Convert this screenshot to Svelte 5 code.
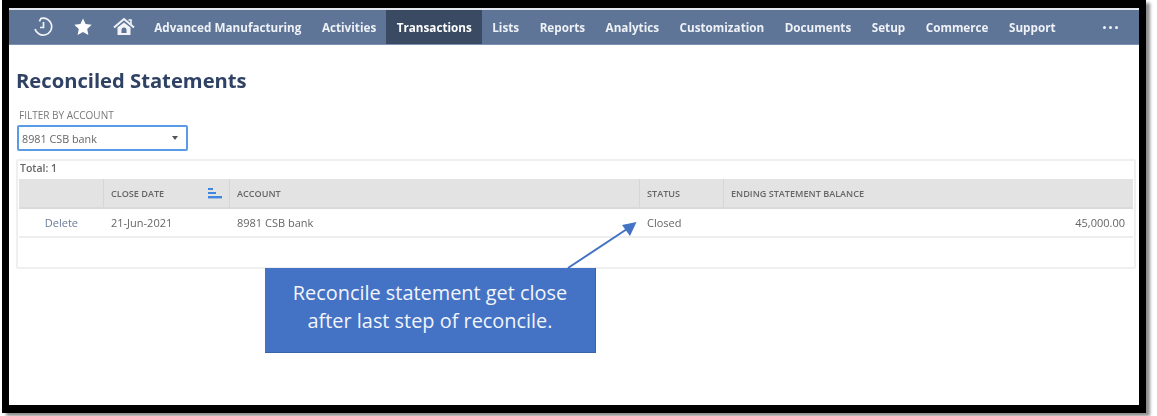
<script lang="ts">
  const navItems = [
    "Advanced Manufacturing",
    "Activities",
    "Transactions",
    "Lists",
    "Reports",
    "Analytics",
    "Customization",
    "Documents",
    "Setup",
    "Commerce",
    "Support",
  ];
  const activeItem = "Transactions";
</script>

<div class="shot">
  <div class="frame">
    <div class="topline"></div>
    <nav class="navbar">
      <div class="icons">
        <svg class="icon" viewBox="0 0 20 20" width="20" height="20" aria-hidden="true">
          <path d="M2 12A8.500 8.500 0 1 0 8 1.400L6.400 4.400" fill="none" stroke="#f1f3f7" stroke-width="1.700" />
          <path d="M10.500 5v5.500H7" fill="none" stroke="#f1f3f7" stroke-width="1.700" />
        </svg>
        <svg class="icon" viewBox="0 0 20 20" width="20" height="20" aria-hidden="true">
          <path d="M10 1.500l2.600 5.600 6.100.7-4.500 4.200 1.200 6L10 15l-5.400 3 1.200-6-4.500-4.200 6.100-.7z" fill="#fff" />
        </svg>
        <svg class="icon" viewBox="0 0 22 20" width="22" height="20" aria-hidden="true">
          <path d="M1 10.500L11 2l10 8.500" fill="none" stroke="#f1f3f7" stroke-width="2" />
          <path d="M15.500 3h2.500v4.500" fill="none" stroke="#f1f3f7" stroke-width="1.600" />
          <path d="M4.500 10.500V18h13v-7.500L11 5.500z" fill="#f1f3f7" />
          <path d="M8.500 16v-3a2.500 2.500 0 0 1 5 0v3z" fill="#5e7598" />
        </svg>
      </div>
      <ul class="menu">
        {#each navItems as item}
          <li class:active={item === activeItem}>{item}</li>
        {/each}
      </ul>
      <div class="more">
        <span></span><span></span><span></span>
      </div>
    </nav>

    <main class="page">
      <h1>Reconciled Statements</h1>
      <div class="filter-label">FILTER BY ACCOUNT</div>
      <div class="select">
        <span>8981 CSB bank</span>
        <i class="caret"></i>
      </div>

      <section class="panel">
        <div class="total">Total: 1</div>
        <div class="grid head">
          <div></div>
          <div class="sort">
            CLOSE DATE
            <svg viewBox="0 0 14 11" width="14" height="11" aria-hidden="true">
              <rect x="0" y="0" width="5" height="2" fill="#3f86e0" />
              <rect x="0" y="4" width="8" height="2" fill="#3f86e0" />
              <rect x="0" y="8" width="14" height="2.400" fill="#3f86e0" />
            </svg>
          </div>
          <div>ACCOUNT</div>
          <div>STATUS</div>
          <div>ENDING STATEMENT BALANCE</div>
        </div>
        <div class="grid row">
          <div class="link">Delete</div>
          <div>21-Jun-2021</div>
          <div>8981 CSB bank</div>
          <div>Closed</div>
          <div class="amount">45,000.00</div>
        </div>
      </section>
    </main>

    <svg class="arrow" viewBox="0 0 80 56" width="80" height="56" aria-hidden="true">
      <path d="M1 52L60 13" stroke="#4472c4" stroke-width="2" fill="none" />
      <path d="M69.500 6L55 9 63 20z" fill="#4472c4" />
    </svg>
    <div class="callout">Reconcile statement get close<br />after last step of reconcile.</div>
  </div>
</div>

<style>
  :global(body) {
    margin: 0;
    background: #fff;
  }

  .shot {
    width: 1157px;
    height: 416px;
    overflow: hidden;
    padding-left: 2px;
    box-sizing: border-box;
    font-family: "Open Sans", "Noto Sans", sans-serif;
    filter: blur(0.6px);
  }

  .frame {
    position: relative;
    width: 1144px;
    height: 413px;
    box-sizing: border-box;
    border: solid #000;
    border-width: 8px 7px;
    background: #fff;
    box-shadow: 4px 3px 3px rgba(0, 0, 0, 0.45);
  }

  .topline {
    height: 2px;
    background: #e4e8ee;
  }

  .navbar {
    display: flex;
    align-items: center;
    height: 35px;
    background: #5e7598;
    border-bottom: 1px solid #7d90ad;
    box-sizing: border-box;
    color: #fff;
  }

  .icons {
    display: flex;
    align-items: center;
    gap: 20px;
    padding-left: 24px;
    width: 135px;
    box-sizing: border-box;
  }

  .icon {
    flex: none;
  }

  .menu {
    display: flex;
    align-items: stretch;
    height: 100%;
    list-style: none;
    margin: 0;
    padding: 0;
    font-size: 11.700px;
    font-weight: 700;
    color: #eef1f6;
  }

  .menu li {
    display: flex;
    align-items: center;
    padding: 0 10.250px;
    white-space: nowrap;
  }

  .menu li.active {
    background: #3b4a63;
    color: #fff;
  }

  .more {
    display: flex;
    gap: 3px;
    margin-left: 37px;
  }

  .more span {
    width: 3px;
    height: 3px;
    border-radius: 50%;
    background: #eef1f6;
  }

  .page {
    padding-left: 7px;
  }

  h1 {
    margin: 0;
    padding-top: 23px;
    font-size: 20.200px;
    line-height: 24px;
    font-weight: 700;
    color: #2f4263;
  }

  .filter-label {
    margin: 17px 0 0 3px;
    font-size: 10px;
    line-height: 13px;
    color: #777;
  }

  .select {
    display: flex;
    align-items: center;
    justify-content: space-between;
    width: 171px;
    height: 26px;
    margin: 3px 0 0 1px;
    padding: 0 8px 0 3px;
    box-sizing: border-box;
    border: 2px solid #5a9be6;
    border-radius: 2px;
    font-size: 10.800px;
    color: #666;
  }

  .caret {
    width: 0;
    height: 0;
    border-left: 3.500px solid transparent;
    border-right: 3.500px solid transparent;
    border-top: 4px solid #555;
  }

  .panel {
    width: 1120px;
    height: 110px;
    margin-top: 8px;
    padding: 0 1px;
    box-sizing: border-box;
    border: 2px solid #efefef;
    border-radius: 2px;
  }

  .total {
    height: 18px;
    padding: 0 1px;
    font-size: 10.500px;
    line-height: 15px;
    font-weight: 600;
    color: #666;
  }

  .grid {
    display: grid;
    grid-template-columns: 84px 126px 410px 84px 410px;
    width: 1114px;
  }

  .head {
    height: 30px;
    background: #e3e3e3;
    border-bottom: 2px solid #dadada;
    box-sizing: border-box;
    font-size: 9.100px;
    font-weight: 600;
    color: #666;
  }

  .head > div {
    display: flex;
    align-items: center;
    justify-content: space-between;
    padding-left: 7px;
    padding-right: 7px;
    border-left: 1px solid #d6d6d6;
  }

  .head > div:first-child {
    border-left: 0;
  }

  .row {
    height: 29px;
    border-bottom: 2px solid #eeeeee;
    box-sizing: border-box;
    font-size: 11px;
    color: #666;
  }

  .row > div {
    display: flex;
    align-items: center;
    padding-left: 8px;
  }

  .row .link {
    justify-content: flex-end;
    padding-right: 25px;
    color: #6b7b98;
  }

  .row .amount {
    justify-content: flex-end;
    padding-right: 8px;
  }

  .arrow {
    position: absolute;
    left: 558px;
    top: 208px;
  }

  .callout {
    position: absolute;
    left: 256px;
    top: 260px;
    width: 331px;
    height: 85px;
    box-sizing: border-box;
    padding-top: 11px;
    background: #4472c4;
    border-bottom: 1px solid #3a62ab;
    border-right: 1px solid #3a62ab;
    color: #f2f5fb;
    font-size: 19.900px;
    line-height: 28px;
    text-align: center;
  }
</style>
